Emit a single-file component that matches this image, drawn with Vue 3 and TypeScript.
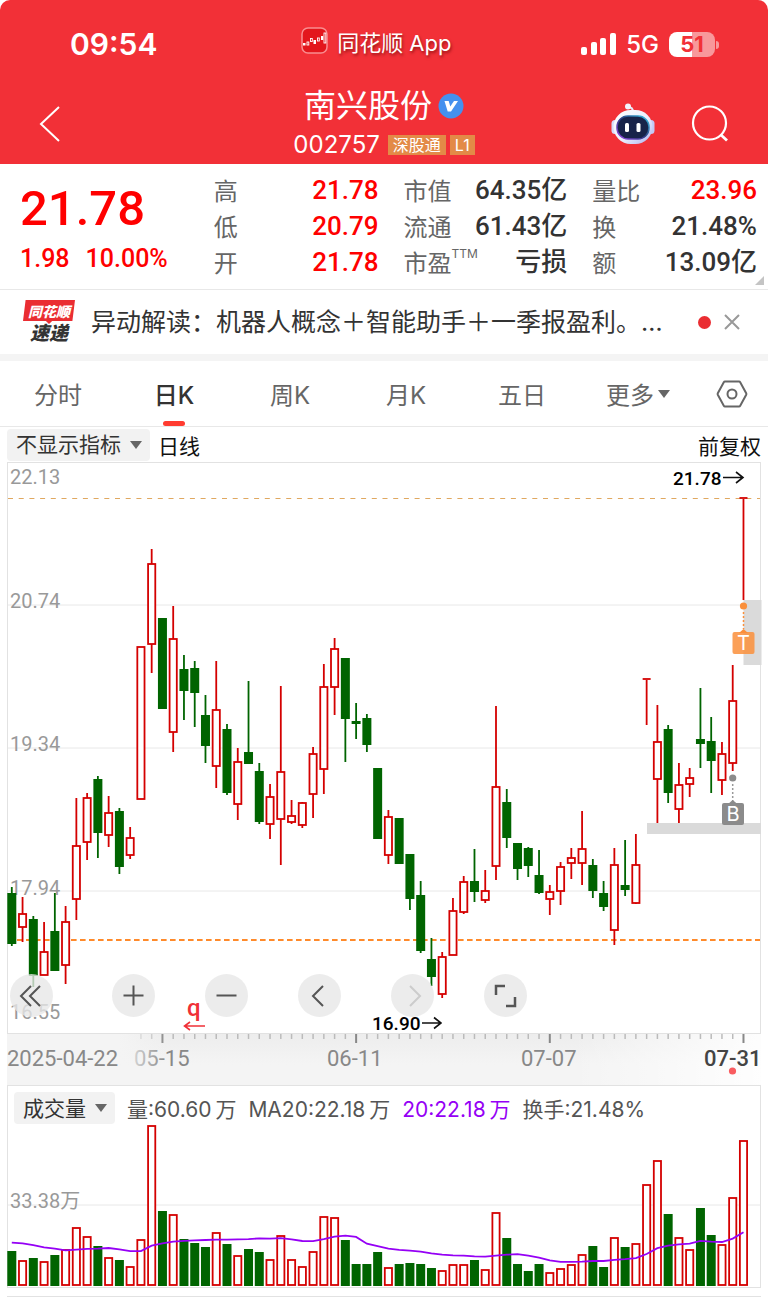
<script setup lang="ts">
import { ref } from 'vue'

type Tone = 'up' | 'down'
// tone, high, body top, body bottom, low (plot units)
type Candle = [Tone, number, number, number, number]

const STEP = 10.76
const FIRST = 11.8
const BAR = 9

const candles: Candle[] = [
  ['down', 887, 893, 944, 946], ['up', 897, 914, 927, 942], ['down', 916, 919, 976, 987],
  ['up', 922, 952, 975, 975], ['down', 893, 931, 971, 971], ['up', 906, 922, 965, 984],
  ['up', 798, 846, 899, 920], ['up', 793, 798, 842, 860], ['down', 776, 779, 833, 858],
  ['up', 796, 813, 835, 847], ['down', 808, 811, 867, 874], ['up', 827, 838, 855, 859],
  ['up', 647, 647, 799, 799], ['up', 549, 564, 644, 673], ['down', 618, 618, 709, 709],
  ['up', 606, 639, 732, 752], ['down', 655, 669, 691, 720], ['down', 661, 668, 693, 727],
  ['down', 695, 715, 746, 763], ['up', 661, 710, 766, 788], ['down', 724, 729, 793, 795],
  ['up', 748, 762, 804, 820], ['down', 681, 752, 764, 764], ['down', 763, 771, 822, 824],
  ['up', 784, 797, 824, 839], ['up', 686, 772, 819, 865], ['up', 800, 816, 822, 824],
  ['up', 802, 803, 825, 828], ['up', 747, 754, 794, 818], ['up', 664, 687, 769, 794],
  ['up', 638, 649, 687, 715], ['down', 658, 658, 719, 762], ['down', 703, 721, 724, 739],
  ['down', 714, 718, 745, 752], ['down', 768, 768, 839, 839], ['up', 810, 817, 855, 864],
  ['down', 818, 818, 864, 864], ['down', 854, 854, 899, 910], ['down', 881, 895, 951, 953],
  ['down', 938, 959, 977, 986], ['up', 952, 957, 994, 998], ['up', 898, 911, 955, 955],
  ['up', 876, 882, 912, 914], ['down', 849, 881, 892, 902], ['up', 870, 891, 900, 903],
  ['up', 706, 787, 866, 880], ['down', 789, 802, 838, 848], ['down', 843, 843, 869, 880],
  ['down', 847, 848, 866, 877], ['down', 850, 875, 893, 894], ['up', 885, 892, 899, 915],
  ['up', 862, 867, 891, 905], ['up', 848, 858, 863, 879], ['up', 811, 849, 863, 885],
  ['down', 859, 865, 891, 898], ['down', 881, 893, 907, 911], ['up', 848, 865, 930, 945],
  ['down', 840, 885, 890, 896], ['up', 834, 865, 903, 904], ['up', 678, 678, 680, 725],
  ['up', 705, 742, 779, 823], ['down', 725, 729, 793, 803], ['up', 763, 785, 809, 823],
  ['up', 768, 778, 784, 797], ['down', 688, 739, 744, 768], ['down', 717, 741, 761, 793],
  ['up', 742, 754, 780, 795], ['up', 665, 701, 763, 771], ['up', 497, 497, 499, 600],
]

const volumeTops = [
  1251, 1260, 1258, 1261, 1255, 1249, 1227, 1236, 1246, 1257, 1260, 1266, 1239, 1125, 1211, 1214,
  1239, 1243, 1247, 1232, 1244, 1255, 1249, 1252, 1259, 1235, 1259, 1266, 1251, 1216, 1217, 1240,
  1264, 1264, 1252, 1267, 1264, 1263, 1264, 1268, 1270, 1264, 1264, 1260, 1269, 1212, 1238, 1264,
  1271, 1264, 1272, 1268, 1264, 1254, 1246, 1267, 1237, 1247, 1243, 1184, 1160, 1214, 1237, 1249,
  1208, 1235, 1244, 1197, 1140,
]

const ma20 = [
  18, 17.7, 17, 16.1, 15.5, 14.8, 15.1, 15.4, 15.5, 15.8, 15.2, 14.5, 14.5, 16.8, 17.7, 18.4,
  18.8, 19, 19.1, 19.3, 19.3, 19.4, 19.5, 19.8, 19.7, 19.9, 19.4, 18.7, 18.6, 19.5, 20.5, 20.9,
  20.4, 17.6, 16.6, 15.5, 15, 14.7, 14.3, 13.6, 13, 12.7, 12.6, 12.3, 12.2, 12.6, 13, 13.2,
  12.6, 11.8, 10.7, 10, 10, 10.1, 10.4, 10.4, 10.9, 11.2, 11.6, 13.3, 15.7, 16.8, 17.3, 17.6,
  18.8, 18.4, 18.3, 19.7, 22.3,
]

const VOLUME_BASE = 1286
const xAt = (i: number) => FIRST + i * STEP
const maPoints = ma20.map((v, i) => `${xAt(i).toFixed(1)},${(VOLUME_BASE - v * 2.406).toFixed(1)}`).join(' ')

const priceLabels = [
  { text: '22.13', y: 484 },
  { text: '20.74', y: 608 },
  { text: '19.34', y: 751 },
  { text: '17.94', y: 895 },
  { text: '16.55', y: 1019 },
]
const majorTicks = [14, 32, 50, 68]
const ticks = Array.from({ length: 57 }, (_, k) => k + 12)

interface Stat { label: string; value: string; red?: boolean; sup?: string }
const stats: Stat[][] = [
  [
    { label: '高', value: '21.78', red: true },
    { label: '低', value: '20.79', red: true },
    { label: '开', value: '21.78', red: true },
  ],
  [
    { label: '市值', value: '64.35亿' },
    { label: '流通', value: '61.43亿' },
    { label: '市盈', value: '亏损', sup: 'TTM' },
  ],
  [
    { label: '量比', value: '23.96', red: true },
    { label: '换', value: '21.48%' },
    { label: '额', value: '13.09亿' },
  ],
]

const tabs = ['分时', '日K', '周K', '月K', '五日', '更多']
const activeTab = ref('日K')
const overlay = ref('不显示指标')
const indicator = ref('成交量')
</script>

<template>
  <main class="page">
    <header class="top">
      <div class="status">
        <span class="time">09:54</span>
        <span class="source">
          <svg class="app-icon" viewBox="0 0 28 28" aria-hidden="true">
            <rect x="1" y="1" width="25" height="25" rx="6" fill="#e3161c" stroke="#f98d90" stroke-width="1.5" />
            <g fill="#fff"><rect x="2" y="16" width="2.5" height="2.5" /><rect x="12.5" y="13" width="2.5" height="4" /><rect x="20" y="9" width="2.2" height="4" /></g>
            <g fill="none" stroke="#fff" stroke-width="0.9"><rect x="6" y="15" width="1.8" height="3" /><rect x="9.5" y="11.5" width="1.8" height="3" /><rect x="16.5" y="11" width="1.8" height="3" /><rect x="23" y="6" width="1.8" height="10" /></g>
          </svg>
          同花顺 App
        </span>
        <span class="signals">
          <svg class="bars" viewBox="0 0 35 22" aria-hidden="true" fill="#fff">
            <rect x="0" y="14" width="6" height="8" rx="2" /><rect x="10" y="9" width="6" height="13" rx="2" />
            <rect x="19" y="5" width="6" height="17" rx="2" /><rect x="29" y="0" width="6" height="22" rx="2" />
          </svg>
          <span class="network">5G</span>
          <span class="battery">51</span>
        </span>
      </div>
      <div class="titlebar">
        <button class="plain" aria-label="返回">
          <svg width="22" height="38" viewBox="0 0 22 38" fill="none" stroke="#fff" stroke-width="2"><path d="M20 2 2 19l18 17" /></svg>
        </button>
        <div class="name-block">
          <h1>南兴股份
            <svg width="26" height="26" viewBox="0 0 26 26" aria-hidden="true"><circle cx="13" cy="13" r="12.5" fill="#4590ee" /><path d="M6.5 8h4.2l1.6 5.6L16 8h4l-7 10.5h-3.3z" fill="#fff" /></svg>
          </h1>
          <p class="code">002757 <span class="tag">深股通</span><span class="tag">L1</span></p>
        </div>
        <div class="actions">
          <button class="plain" aria-label="智能助手">
            <svg width="44" height="42" viewBox="0 0 44 42">
              <defs>
                <linearGradient id="shell" x1="0" y1="0" x2="1" y2="1"><stop offset="0" stop-color="#fff" /><stop offset="0.55" stop-color="#eceffd" /><stop offset="1" stop-color="#aab0ee" /></linearGradient>
                <linearGradient id="rim" x1="0" y1="1" x2="1" y2="0"><stop offset="0" stop-color="#9a46e8" /><stop offset="0.5" stop-color="#2b3c80" /><stop offset="1" stop-color="#39c6e8" /></linearGradient>
              </defs>
              <path d="M22 9c0-4-2-5-5-5" fill="none" stroke="#e6e8f8" stroke-width="2" />
              <circle cx="17" cy="3.500" r="3" fill="#f2f3fc" />
              <rect x="0.500" y="17" width="7" height="14" rx="3.500" fill="#d6dbfa" /><rect x="36.500" y="17" width="7" height="14" rx="3.500" fill="#c3c9f5" />
              <rect x="2.500" y="7" width="39" height="34" rx="17" fill="url(#shell)" />
              <rect x="6" y="13" width="32" height="23" rx="11" fill="#182349" stroke="url(#rim)" stroke-width="1.500" />
              <rect x="14" y="20" width="4" height="9" rx="1.500" fill="#fff" /><rect x="25.500" y="20" width="4" height="9" rx="1.500" fill="#fff" />
            </svg>
          </button>
          <button class="plain" aria-label="搜索">
            <svg width="38" height="38" viewBox="0 0 38 38" fill="none" stroke="#fff" stroke-width="2.200"><circle cx="18.500" cy="18" r="16.500" /><path d="m29.500 29.500 6.500 6" stroke-width="2.800" /></svg>
          </button>
        </div>
      </div>
    </header>

    <section class="quote">
      <div class="price">
        <strong>21.78</strong>
        <p><span>1.98</span><span>10.00%</span></p>
      </div>
      <dl v-for="(col, c) in stats" :key="c">
        <div v-for="s in col" :key="s.label">
          <dt>{{ s.label }}<sup v-if="s.sup">{{ s.sup }}</sup></dt>
          <dd :class="{ red: s.red }">{{ s.value }}</dd>
        </div>
      </dl>
      <i class="corner"></i>
    </section>

    <section class="news">
      <span class="flash">
        <span class="flash-top">同花顺</span>
        <span class="flash-bottom">速递</span>
      </span>
      <a href="#news">异动解读：机器人概念＋智能助手＋一季报盈利。…</a>
      <i class="dot"></i>
      <button class="plain" aria-label="关闭">
        <svg width="16" height="16" viewBox="0 0 16 16" stroke="#999" stroke-width="2"><path d="m1 1 14 14M15 1 1 15" /></svg>
      </button>
    </section>

    <nav class="tabs">
      <button v-for="t in tabs" :key="t" class="plain" :class="{ active: t === activeTab }" @click="activeTab = t">
        {{ t }}<i v-if="t === '更多'" class="caret"></i>
      </button>
      <button class="plain" aria-label="设置">
        <svg width="32" height="28" viewBox="0 0 32 28" fill="none" stroke="#666" stroke-width="2"><path d="M9 1.500h14q.8 0 1.200.7l6 11q.4.800 0 1.600l-6 11q-.4.700-1.200.7H9q-.8 0-1.200-.7l-6-11q-.4-.8 0-1.600l6-11q.4-.7 1.200-.7z" /><circle cx="16" cy="14" r="4.500" /></svg>
      </button>
    </nav>

    <div class="toolbar">
      <span class="picker">
        <select v-model="overlay" aria-label="主图指标"><option>不显示指标</option></select>
        <i class="caret"></i>
      </span>
      <span>日线</span>
      <span class="adjust">前复权</span>
    </div>

    <section class="plot">
      <svg class="chart" viewBox="8 463 752 570" role="img" aria-label="日K线">
        <g stroke="#e8e8e8"><path d="M8 605H760M8 748H760M8 891H760" /></g>
        <rect x="743.500" y="600" width="18" height="65" fill="#dadada" />
        <rect x="647" y="823" width="114" height="11" fill="#dadada" />
        <path d="M8 498.500H760" stroke="#e0a860" stroke-width="1.200" stroke-dasharray="5 5.700" />
        <path d="M8 940H760" stroke="#ff8a2b" stroke-width="2" stroke-dasharray="5.600 3.400" />
        <text v-for="l in priceLabels" :key="l.text" class="axis" x="10" :y="l.y">{{ l.text }}</text>
        <g v-for="(k, i) in candles" :key="i" :class="k[0]">
          <path :d="`M${xAt(i)} ${k[1]}V${k[2]}M${xAt(i)} ${k[3]}V${k[4]}`" class="wick" />
          <rect v-if="k[0] === 'down'" :x="xAt(i) - BAR / 2" :y="k[2]" :width="BAR" :height="k[3] - k[2]" />
          <rect v-else-if="k[3] - k[2] > 2" :x="xAt(i) - 3.6" :y="k[2]" width="7.2" :height="k[3] - k[2]" />
          <path v-else :d="`M${xAt(i) - 4} ${k[2] + 1}h8`" class="wick" />
        </g>
        <g stroke="#111" stroke-width="1.600" fill="none">
          <path d="M723 477.500H743M736 472l7 5.500-7 5.500M422 1023H441M434 1017.500l7 5.500-7 5.500" />
        </g>
        <text class="mark" x="673" y="485">21.78</text>
        <text class="mark" x="372" y="1030">16.90</text>
        <text class="q" x="187" y="1016">q</text>
        <path d="M205 1026H185M190 1022l-5.500 4 5.500 4" stroke="#f03037" stroke-width="1.600" fill="none" />
        <g fill="#fa8f3b">
          <circle cx="743.500" cy="606" r="3.600" />
          <path d="M743.500 612V629" stroke="#fa8f3b" stroke-width="1.500" stroke-dasharray="2 2" />
          <path d="m739 633 4.500-4 4.500 4z" />
          <rect x="732.500" y="632" width="22" height="22" rx="2" opacity="0.85" />
        </g>
        <g fill="#8b8b8b">
          <circle cx="732.700" cy="778" r="3.600" />
          <path d="M732.700 784V801" stroke="#999" stroke-width="1.500" stroke-dasharray="2 2" />
          <path d="m728 804 4.700-4 4.700 4z" />
          <rect x="722" y="803" width="22" height="22" rx="2" />
        </g>
        <text class="badge" x="743.500" y="650">T</text>
        <text class="badge" x="733" y="821">B</text>
      </svg>
      <div class="controls">
        <button aria-label="最早"><svg viewBox="0 0 43 43"><path d="M21 12 11 22l10 10M30 12 20 22l10 10" /></svg></button>
        <div class="control-group">
          <button aria-label="放大"><svg viewBox="0 0 43 43"><path d="M11.500 21.500h20M21.500 11.500v20" /></svg></button>
          <button aria-label="缩小"><svg viewBox="0 0 43 43"><path d="M11.500 21.500h20" /></svg></button>
          <button aria-label="向左"><svg viewBox="0 0 43 43"><path d="M25 12 15 22l10 10" /></svg></button>
          <button aria-label="向右" disabled><svg viewBox="0 0 43 43"><path d="m19 12 10 10-10 10" /></svg></button>
          <button aria-label="全屏"><svg viewBox="0 0 43 43"><path d="M12 21v-9h9M31 23v9h-9" stroke-width="2.500" /></svg></button>
        </div>
      </div>
    </section>

    <svg class="dates" viewBox="0 1034 768 51" role="img" aria-label="日期">
      <defs>
        <linearGradient id="fade" x1="0" x2="1"><stop offset="0.75" stop-color="#fff" stop-opacity="0" /><stop offset="1" stop-color="#fff" stop-opacity="0.9" /></linearGradient>
        <linearGradient id="strip" x1="0" x2="0" y1="0" y2="1"><stop offset="0" stop-color="#ededed" /><stop offset="0.6" stop-color="#f4f4f4" /></linearGradient>
        <linearGradient id="veil" x1="0" x2="1"><stop offset="0.7" stop-color="#f4f4f4" /><stop offset="1" stop-color="#f4f4f4" stop-opacity="0" /></linearGradient>
      </defs>
      <rect x="7" y="1034" width="754" height="51" fill="url(#strip)" />
      <rect x="7" y="1034" width="754" height="51" fill="url(#fade)" />
      <path v-for="i in ticks" :key="i" :d="`M${xAt(i)} 1034v${majorTicks.includes(i) ? 9 : 5}`" :class="majorTicks.includes(i) ? 'major' : 'minor'" />
      <text class="date" x="134" y="1066">05-15</text>
      <rect x="7" y="1034" width="160" height="51" fill="url(#veil)" />
      <text class="date" x="7" y="1066">2025-04-22</text>
      <text class="date" x="327" y="1066">06-11</text>
      <text class="date" x="521" y="1066">07-07</text>
      <text class="date now" x="704" y="1066">07-31</text>
      <circle cx="732.500" cy="1071" r="3.600" fill="#f95c60" />
    </svg>

    <section class="volume">
      <div class="legend">
        <span class="picker">
          <select v-model="indicator" aria-label="副图指标"><option>成交量</option></select>
          <i class="caret"></i>
        </span>
        <span>量:60.60&#8201;万</span>
        <span>MA20:22.18&#8201;万</span>
        <span class="purple">20:22.18&#8201;万</span>
        <span>换手:21.48%</span>
      </div>
      <svg class="chart" viewBox="8 1124 752 163" role="img" aria-label="成交量">
        <path d="M8 1205H760" stroke="#e8e8e8" />
        <text class="axis" x="10" y="1208">33.38万</text>
        <g v-for="(t, i) in volumeTops" :key="i" :class="candles[i][0]">
          <rect v-if="candles[i][0] === 'down'" :x="xAt(i) - BAR / 2" :y="t" :width="BAR" :height="VOLUME_BASE - t" />
          <rect v-else :x="xAt(i) - 3.6" :y="t + 1" width="7.2" :height="VOLUME_BASE - t - 2" />
        </g>
        <polyline :points="maPoints" fill="none" stroke="#9500f5" stroke-width="1.800" />
      </svg>
    </section>
    <div class="next-panel"></div>
  </main>
</template>

<style>
body {
  margin: 0;
  background: #fff;
}
</style>

<style scoped>
.page {
  font-family: Inter, 'Noto Sans CJK SC', sans-serif;
  color: #333;
  background: #fff;
}
.plain {
  display: flex;
  align-items: center;
  justify-content: center;
  margin: 0;
  padding: 0;
  border: 0;
  background: none;
  color: inherit;
  font: inherit;
}
svg {
  flex: none;
}
.top {
  padding-top: 5px;
  border-radius: 10px 10px 0 0;
  background: #f23037;
  color: #fff;
}
.status {
  display: flex;
  align-items: center;
  justify-content: space-between;
  height: 78px;
  padding: 0 49px 0 70px;
}
.time {
  font-size: 30px;
  font-weight: 600;
}
.source {
  display: flex;
  align-items: center;
  gap: 8px;
  padding: 0 0 6px 14px;
  font-size: 22px;
  text-shadow: 1px 2px 3px rgba(90, 0, 0, 0.6);
}
.app-icon {
  width: 28px;
  height: 28px;
}
.signals {
  display: flex;
  align-items: center;
  gap: 10px;
}
.bars {
  width: 35px;
  height: 22px;
}
.network {
  font-size: 24px;
  font-weight: 500;
}
.battery {
  position: relative;
  width: 46px;
  margin-right: 4px;
  border-radius: 8px;
  background: linear-gradient(90deg, #fff 51%, #f8989b 51%);
  color: #f23037;
  font-size: 22px;
  font-weight: 700;
  line-height: 25px;
  text-align: center;
}
.battery::after {
  content: '';
  position: absolute;
  right: -4px;
  top: 9px;
  width: 3px;
  height: 8px;
  border-radius: 0 3px 3px 0;
  background: #f8989b;
}
.titlebar {
  display: grid;
  grid-template-columns: 1fr auto 1fr;
  align-items: center;
  height: 81px;
  padding: 0 39px;
}
.titlebar > .plain {
  justify-self: start;
}
.name-block {
  display: flex;
  flex-direction: column;
  align-items: center;
}
h1 {
  display: flex;
  align-items: center;
  gap: 6px;
  margin: 0;
  font-size: 32px;
  font-weight: 400;
  line-height: 42px;
}
.code {
  display: flex;
  align-items: center;
  gap: 4px;
  margin: 0;
  font-size: 24px;
  line-height: 36px;
}
.tag {
  padding: 0 5px;
  background: #e38a47;
  font-size: 16px;
  line-height: 20px;
}
.code .tag:first-of-type {
  margin-left: 4px;
}
.actions {
  display: flex;
  align-items: center;
  justify-content: flex-end;
  gap: 36px;
}
.quote {
  position: relative;
  display: grid;
  grid-template-columns: 169fr 165fr 164fr 165fr;
  column-gap: 25px;
  padding: 8px 11px 9px 20px;
  border-bottom: 1px solid #e8e8e8;
}
.price {
  color: #f00;
  font-family: Roboto, sans-serif;
  font-weight: 500;
}
.price strong {
  display: block;
  font-size: 49px;
  font-weight: 500;
  line-height: 74px;
}
.price p {
  display: flex;
  gap: 16px;
  margin: 0;
  font-size: 25px;
  line-height: 26px;
}
dl {
  margin: 0;
}
dl div {
  display: flex;
  align-items: center;
  justify-content: space-between;
  height: 36px;
  white-space: nowrap;
}
dt {
  color: #666;
  font-family: 'Noto Sans CJK SC', sans-serif;
  font-size: 24px;
  line-height: 36px;
}
dt sup {
  font-family: Inter, sans-serif;
  font-size: 12px;
  line-height: 12px;
  vertical-align: 14px;
}
dd {
  margin: 0;
  font-family: Roboto, 'Noto Sans CJK SC', sans-serif;
  font-size: 26px;
  font-weight: 500;
  line-height: 36px;
}
.red {
  color: #f00;
}
.corner {
  position: absolute;
  right: 4px;
  bottom: 4px;
  border-left: 9px solid transparent;
  border-bottom: 9px solid #c4c4c4;
}
.news {
  display: flex;
  align-items: center;
  height: 64px;
  padding: 0 28px 0 23px;
  border-bottom: 7px solid #f4f4f4;
}
.flash {
  display: flex;
  flex-direction: column;
  align-items: center;
  flex: none;
  width: 52px;
  margin-right: 16px;
  font-style: italic;
  font-weight: 900;
}
.flash-top {
  width: 52px;
  background: #ea2d32;
  clip-path: polygon(5% 0, 100% 0, 95% 88%, 56% 88%, 50% 100%, 44% 88%, 0 88%);
  color: #fff;
  font-size: 14px;
  line-height: 24px;
  text-align: center;
}
.flash-bottom {
  font-size: 19px;
  line-height: 20px;
}
.news a {
  flex: 1;
  overflow: hidden;
  color: #333;
  font-size: 25px;
  line-height: 40px;
  white-space: nowrap;
  text-decoration: none;
}
.dot {
  flex: none;
  width: 13px;
  height: 13px;
  margin: 0 13px 0 25px;
  border-radius: 50%;
  background: #ea2d32;
}
.tabs {
  display: grid;
  grid-template-columns: repeat(6, 29fr) 18fr;
  height: 65px;
  border-bottom: 1px solid #e8e8e8;
  color: #666;
  font-size: 24px;
}
.tabs .plain {
  position: relative;
}
.tabs .active {
  color: #333;
  font-weight: 500;
}
.tabs .active::after {
  content: '';
  position: absolute;
  bottom: 0;
  left: 50%;
  width: 22px;
  height: 5px;
  margin-left: -11px;
  border-radius: 3px;
  background: #ff3b30;
}
.caret {
  flex: none;
  margin-left: 4px;
  border: 6px solid transparent;
  border-top: 8px solid #666;
  border-bottom: 0;
}
.toolbar {
  display: flex;
  align-items: center;
  gap: 8px;
  height: 35px;
  padding: 0 7px;
  color: #111;
  font-size: 21px;
}
.adjust {
  margin-left: auto;
}
.picker {
  position: relative;
  display: flex;
  align-items: center;
  height: 32px;
  border-radius: 4px;
  background: #f2f2f2;
}
.picker select {
  appearance: none;
  height: 32px;
  margin: 0;
  padding: 0 29px 0 9px;
  border: 0;
  background: none;
  color: #333;
  font-family: inherit;
  font-size: 21px;
}
.picker .caret {
  position: absolute;
  right: 8px;
  pointer-events: none;
}
.plot {
  position: relative;
  margin: 0 7px;
  border: 1px solid #e2e2e2;
}
.chart,
.dates {
  display: block;
  width: 100%;
  height: auto;
  overflow: visible;
}
.chart text,
.date {
  font-family: Roboto, 'Noto Sans CJK SC', sans-serif;
}
.axis {
  fill: #999;
  font-size: 20px;
}
.mark {
  fill: #000;
  font-size: 19px;
  font-weight: 500;
}
.q {
  fill: #f03037;
  font-size: 24px;
  font-weight: 500;
}
.chart .badge {
  fill: #fff;
  font-family: Inter, sans-serif;
  font-size: 20px;
  text-anchor: middle;
}
.up rect {
  fill: #fff;
  stroke: #d40000;
  stroke-width: 1.8;
}
.down rect {
  fill: #006400;
}
.wick {
  stroke: #d40000;
  stroke-width: 1.8;
}
.down .wick {
  stroke: #006400;
}
.controls {
  position: absolute;
  left: 2px;
  bottom: 16px;
  display: flex;
  gap: 59px;
}
.control-group {
  display: flex;
  gap: 50px;
}
.controls button {
  width: 43px;
  height: 43px;
  padding: 0;
  border: 0;
  border-radius: 50%;
  background: rgba(231, 231, 231, 0.78);
}
.controls svg {
  display: block;
  fill: none;
  stroke: #555;
  stroke-width: 2;
}
.controls button:disabled svg {
  stroke: #ccc;
}
.minor {
  stroke: #bbb;
  stroke-width: 1.5;
}
.major {
  stroke: #888;
  stroke-width: 2;
}
.date {
  fill: #888;
  font-size: 22px;
}
.now {
  fill: #444;
  font-weight: 500;
}
.volume {
  margin: 0 7px;
  border: 1px solid #e2e2e2;
}
.legend {
  display: flex;
  align-items: center;
  gap: 12px;
  height: 32px;
  padding: 6px 6px 0;
  color: #555;
  font-size: 21px;
  white-space: nowrap;
}
.purple {
  color: #9500f5;
}
.next-panel {
  margin: 8px 7px 0;
  border-top: 1px solid #e2e2e2;
}
</style>
